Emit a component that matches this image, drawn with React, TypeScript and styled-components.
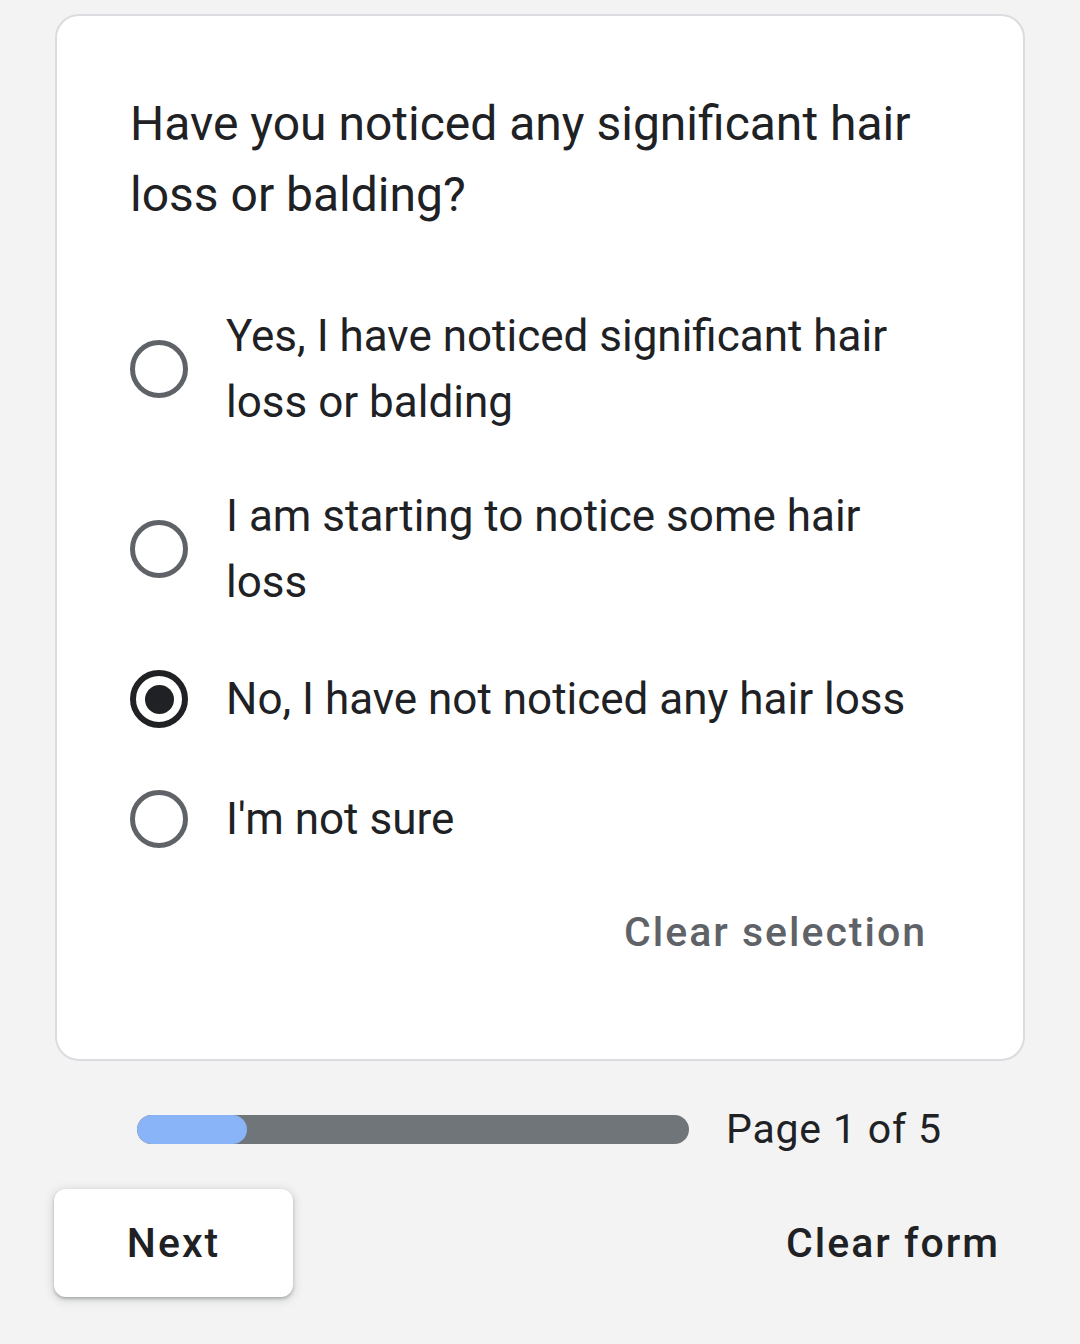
import React, { useState } from "react";
import styled, { createGlobalStyle } from "styled-components";

const GlobalStyle = createGlobalStyle`
  html, body {
    margin: 0;
    padding: 0;
    background: #f3f3f3;
  }
  body {
    font-family: Roboto, "Liberation Sans", Arial, sans-serif;
    color: #202124;
  }
`;

const options = [
  "Yes, I have noticed significant hair loss or balding",
  "I am starting to notice some hair loss",
  "No, I have not noticed any hair loss",
  "I'm not sure",
];

const App: React.FC = () => {
  const [selected, setSelected] = useState<number | null>(2);
  const page = 1;
  const total = 5;

  return (
    <Page>
      <GlobalStyle />
      <Card>
        <Question>Have you noticed any significant hair loss or balding?</Question>
        <OptionList>
          {options.map((label, i) => (
            <OptionRow key={label} onClick={() => setSelected(i)}>
              <RadioBox>
                <Radio $checked={selected === i} />
              </RadioBox>
              <OptionText>{label}</OptionText>
            </OptionRow>
          ))}
        </OptionList>
        <ClearRow>
          <ClearSelection onClick={() => setSelected(null)}>Clear selection</ClearSelection>
        </ClearRow>
      </Card>

      <ProgressRow>
        <Track>
          <Fill style={{ width: `${(page / total) * 100}%` }} />
        </Track>
        <PageLabel>
          Page {page} of {total}
        </PageLabel>
      </ProgressRow>

      <Footer>
        <NextButton>Next</NextButton>
        <ClearForm onClick={() => setSelected(null)}>Clear form</ClearForm>
      </Footer>
    </Page>
  );
};

const Page = styled.div`
  width: 1080px;
  min-height: 1344px;
  box-sizing: border-box;
  padding: 14px 55px 0 55px;
  background: #f3f3f3;
`;

const Card = styled.div`
  background: #fff;
  border: 2.5px solid #dadce0;
  border-radius: 24px;
  box-sizing: border-box;
  height: 1047px;
  padding: 72px 72px 0 73px;
`;

const Question = styled.div`
  font-size: 48px;
  line-height: 71px;
  color: #202124;
  width: 800px;
`;

const OptionList = styled.div`
  margin-top: 49px;
  display: flex;
  flex-direction: column;
`;

const OptionRow = styled.label`
  display: flex;
  align-items: center;
  padding: 24px 0;
  min-height: 72px;
  cursor: pointer;
`;

const RadioBox = styled.div`
  width: 96px;
  flex: none;
  display: flex;
  align-items: center;
`;

const Radio = styled.span<{ $checked: boolean }>`
  width: 58px;
  height: 58px;
  box-sizing: border-box;
  border-radius: 50%;
  border: ${(p) => (p.$checked ? "6px solid #202124" : "5.5px solid #5f6368")};
  display: flex;
  align-items: center;
  justify-content: center;

  &::after {
    content: "";
    width: 29px;
    height: 29px;
    border-radius: 50%;
    background: #202124;
    display: ${(p) => (p.$checked ? "block" : "none")};
  }
`;

const OptionText = styled.span`
  font-size: 44px;
  line-height: 66px;
  color: #202124;
  max-width: 680px;
`;

const ClearRow = styled.div`
  display: flex;
  justify-content: flex-end;
  margin-top: 9px;
`;

const ClearSelection = styled.button`
  background: none;
  border: none;
  padding: 20px 24px;
  font-family: Roboto, "Liberation Sans", Arial, sans-serif;
  font-weight: 500;
  font-size: 41px;
  letter-spacing: 2px;
  color: #5f6368;
  cursor: pointer;
`;

const ProgressRow = styled.div`
  display: flex;
  align-items: center;
  margin-top: 44px;
  padding-left: 82px;
  gap: 37px;
`;

const Track = styled.div`
  width: 552px;
  height: 29px;
  border-radius: 15px;
  background: #70757a;
  overflow: hidden;
`;

const Fill = styled.div`
  height: 100%;
  border-radius: 15px;
  background: #8ab4f8;
`;

const PageLabel = styled.span`
  font-size: 41px;
  letter-spacing: 0.8px;
  color: #202124;
`;

const Footer = styled.div`
  display: flex;
  align-items: center;
  justify-content: space-between;
  margin-top: 36px;
  margin-left: -1px;
`;

const NextButton = styled.button`
  width: 239px;
  height: 108px;
  border: none;
  border-radius: 12px;
  background: #fff;
  box-shadow: 0 2px 3px rgba(60, 64, 67, 0.3), 0 2px 8px 2px rgba(60, 64, 67, 0.15);
  font-family: Roboto, "Liberation Sans", Arial, sans-serif;
  font-weight: 500;
  font-size: 41px;
  letter-spacing: 2px;
  color: #202124;
  cursor: pointer;
`;

const ClearForm = styled.button`
  background: none;
  border: none;
  padding: 20px 25px;
  font-family: Roboto, "Liberation Sans", Arial, sans-serif;
  font-weight: 500;
  font-size: 41px;
  letter-spacing: 2px;
  color: #202124;
  cursor: pointer;
`;

export default App;
